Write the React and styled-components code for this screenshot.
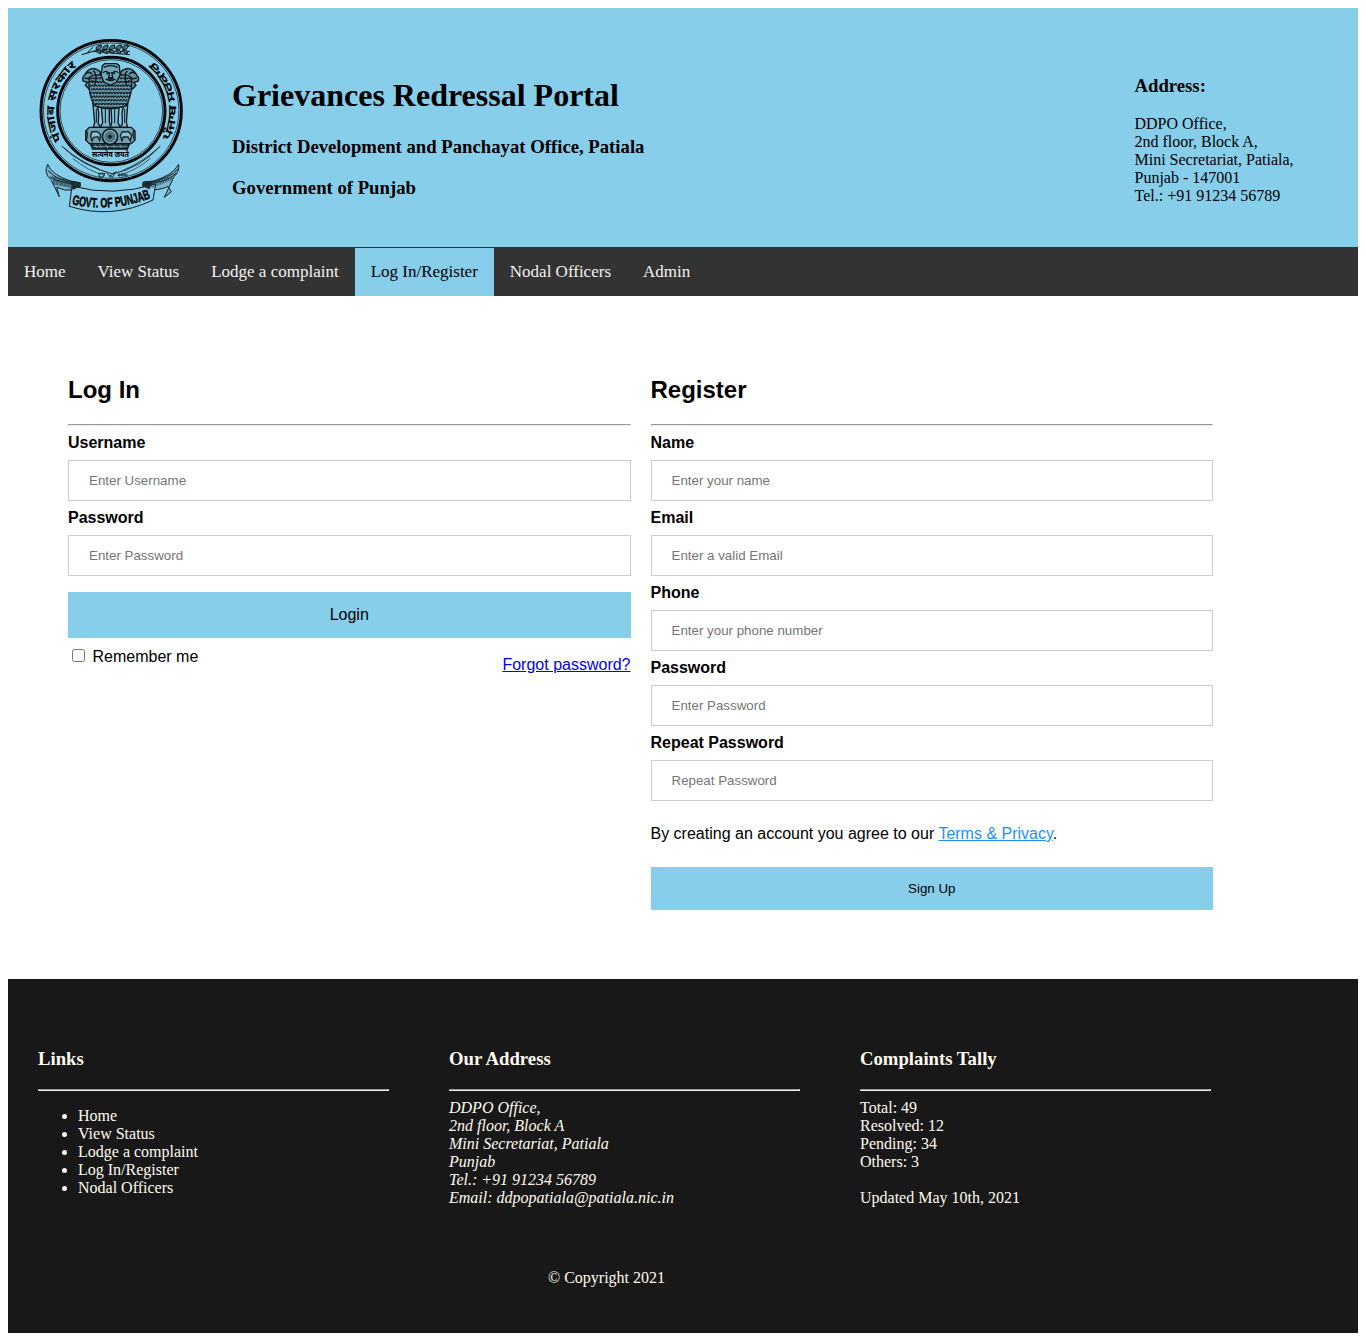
import React from "react";
import styled, { createGlobalStyle } from "styled-components";

const GlobalStyle = createGlobalStyle`
  body {
    margin: 8px;
    background: #fff;
    color: #000;
    font-family: "Liberation Serif", "Times New Roman", serif;
    font-size: 16px;
  }
`;

const Header = styled.header`
  display: flex;
  align-items: flex-start;
  box-sizing: border-box;
  height: 239px;
  padding: 22px 64.5px 0 22px;
  background: #87ceeb;
`;

const Emblem = styled.svg`
  flex: none;
  width: 160px;
  height: 190px;
`;

const Titles = styled.div`
  flex: 1;
  padding: 47px 0 0 42px;
`;

const PortalTitle = styled.h1`
  margin: 0 0 22px;
  font-size: 32px;
  line-height: 37px;
`;

const Subtitle = styled.h3`
  margin: 0 0 20px;
  font-size: 18.72px;
  line-height: 21px;
`;

const HeaderAddress = styled.div`
  width: 159px;
  padding-top: 45px;
  line-height: 18px;
  white-space: nowrap;
`;

const Nav = styled.nav`
  display: flex;
  padding-top: 1px;
  background: #333;
`;

const NavLink = styled.a`
  padding: 14px 16px;
  font-size: 17px;
  line-height: 20px;
  text-decoration: none;
  background: ${(p) => (p.$active ? "#87ceeb" : "transparent")};
  color: ${(p) => (p.$active ? "#000" : "#f2f2f2")};
`;

const Main = styled.main`
  display: grid;
  grid-template-columns: 562.5px 562.5px;
  column-gap: 20px;
  box-sizing: border-box;
  height: 683px;
  padding: 80px 60px 0;
  font-family: "Liberation Sans", Arial, sans-serif;
  line-height: 18px;
`;

const FormTitle = styled.h2`
  margin: 0 0 21px;
  font-size: 24px;
  line-height: 27px;
`;

const Rule = styled.hr`
  margin: 0 0 8px;
`;

const Label = styled.label`
  display: block;
  font-weight: bold;
`;

const Input = styled.input`
  display: block;
  box-sizing: border-box;
  width: 100%;
  height: 41px;
  margin: 8px 0;
  padding: 12px 20px;
  border: 1px solid #ccc;
  font-family: inherit;
  font-size: 13.333px;

  &::placeholder {
    color: #757575;
  }
`;

const Button = styled.button`
  display: block;
  width: 100%;
  margin: 16px 0 8px;
  padding: 14px 20px;
  border: none;
  background: #87ceeb;
  color: #000;
  font-family: inherit;
  font-size: ${(p) => (p.$large ? "16px" : "13.333px")};
  line-height: ${(p) => (p.$large ? "18px" : "15px")};
`;

const LoginOptions = styled.div`
  display: flex;
  justify-content: space-between;
  align-items: flex-start;
`;

const Remember = styled.label`
  display: flex;
  align-items: flex-start;
  padding-top: 2px;
`;

const Checkbox = styled.input`
  width: 13px;
  height: 13px;
  margin: 1px 7.5px 0 4px;
`;

const Forgot = styled.a`
  padding-top: 10px;
  color: #0000ee;
  text-decoration: underline;
`;

const Terms = styled.p`
  margin: 24px 0;
`;

const TermsLink = styled.a`
  color: #1e90ff;
  text-decoration: underline;
`;

const Footer = styled.footer`
  box-sizing: border-box;
  height: 354px;
  padding: 69px 30px 0;
  background: #181818;
  color: #fffaf0;
  line-height: 18px;
`;

const FooterColumns = styled.div`
  display: grid;
  grid-template-columns: repeat(3, 351px);
  column-gap: 60px;
  height: 221px;
`;

const BlockTitle = styled.h3`
  margin: 0 0 ${(p) => p.$gap || 20}px;
  font-size: 18.72px;
  line-height: 21px;
`;

const LinkList = styled.ul`
  margin: 16px 0 0;
  padding-left: 40px;
`;

const FooterAddress = styled.address`
  font-style: italic;
`;

const Copyright = styled.div`
  width: 1137px;
  text-align: center;
`;

const SealText = styled.text`
  font-family: "Noto Sans", "Noto Sans Devanagari", "Noto Sans Gurmukhi", "DejaVu Sans", sans-serif;
  font-weight: bold;
  font-size: ${(p) => p.$size}px;
`;

const RibbonText = styled.text`
  font-family: "Liberation Sans", Arial, sans-serif;
  font-weight: bold;
  font-size: 41px;
  stroke: #000;
  stroke-width: 1.4px;
`;

const navItems = ["Home", "View Status", "Lodge a complaint", "Log In/Register", "Nodal Officers", "Admin"];

const registerFields = [
  ["Name", "Enter your name", "text"],
  ["Email", "Enter a valid Email", "text"],
  ["Phone", "Enter your phone number", "text"],
  ["Password", "Enter Password", "password"],
  ["Repeat Password", "Repeat Password", "password"],
];

function Field({ label, placeholder, type = "text" }) {
  return (
    <>
      <Label>{label}</Label>
      <Input type={type} placeholder={placeholder} />
    </>
  );
}

/* Scalloped rows of fur on the lions' chests */
function Mane() {
  const rows = [];
  for (let r = 0; r < 9; r++) {
    const y = 142 + r * 11;
    const half = 61 - Math.max(0, r - 5) * 5;
    let d = "";
    for (let x = 241 - half + (r % 2) * 4; x < 237 + half; x += 9) {
      d += `M${x} ${y}q3 10 7 0`;
    }
    rows.push(<path key={r} d={d} />);
  }
  return <g fill="none" stroke="#10181c" strokeWidth="3.4">{rows}</g>;
}

function PunjabEmblem() {
  const rays = Array.from({ length: 16 }, (_, i) => (
    <path key={i} d="M240 307V320" transform={`rotate(${i * 22.5} 240 320)`} />
  ));
  return (
    <Emblem viewBox="0 0 480 570" role="img" aria-label="Government of Punjab">
      <defs>
        <path id="sealLeft" d="M96 330A170 170 0 0 1 150 102" />
        <path id="sealRight" d="M417 332A195 195 0 0 0 357 84" />
        <path id="ribbon" d="M125 523Q245 550 369 502" />
        <clipPath id="chest">
          <path d="M178 138Q241 115 304 138Q308 190 289 227Q241 245 193 227Q174 190 178 138Z" />
        </clipPath>
      </defs>
      <g fill="none" stroke="#05090b">
        <circle cx="243.5" cy="242" r="210.5" strokeWidth="9" />
        <circle cx="243.5" cy="242" r="203" strokeWidth="2" />
        <circle cx="244" cy="243" r="161" strokeWidth="9" />
        <circle cx="244" cy="243" r="154" strokeWidth="2" />
      </g>
      {/* Wheat ear */}
      <g fill="none" stroke="#0b1317" strokeWidth="3">
        <path d="M155 74L190 64H300M170 70L190 51M190 64L298 48M190 64L300 74" />
        {[198, 218, 238, 258, 278].map((x) => (
          <g key={x} fill="#4c7686">
            <path d={`M${x} 58q-1-12 16-13q2 9-6 13z`} />
            <path d={`M${x} 60q1 10 14 11q3-6-5-11z`} />
          </g>
        ))}
      </g>
      <SealText $size={34}>
        <textPath href="#sealLeft" textLength="246" lengthAdjust="spacingAndGlyphs">पंजाब सरकार</textPath>
      </SealText>
      <SealText $size={34}>
        <textPath href="#sealRight" textLength="262" lengthAdjust="spacingAndGlyphs">ਪੰਜਾਬ ਸਰਕਾਰ</textPath>
      </SealText>
      {/* Legs */}
      <g fill="#7db9d2" stroke="#0c161a" strokeWidth="4">
        <path d="M188 212Q205 225 206 248L205 282L213 292H190L194 278Z" />
        <path d="M213 220H238V276L242 292H211L218 278Z" />
        <path d="M243 220H268L264 278L271 292H241L245 278Z" />
        <path d="M294 212Q278 225 276 248L277 282L270 292H293L289 278Z" />
        <path d="M226 232V280M254 232V280M199 236V278M284 236V278" strokeWidth="3" />
      </g>
      {/* Side lions, chest and facing head */}
      <g fill="#6496a8" stroke="#0c161a" strokeWidth="4">
        <path d="M211 126Q190 107 172 123L158 143L159 153L172 157L166 166L178 178L207 174Z" />
        <path d="M272 126Q293 107 311 123L326 143L325 153L312 157L318 166L306 178L277 174Z" />
        <path d="M178 142Q202 124 241 151Q281 124 304 142Q309 190 289 227Q241 245 193 227Q173 190 178 142Z" />
      </g>
      <g clipPath="url(#chest)"><Mane /></g>
      <g fill="#6fa8bb" stroke="#0c161a" strokeWidth="4">
        <path d="M217 107L224 101H260L268 107L270 135L259 157L242 165L222 157L213 136Z" />
        <path d="M221 112Q242 102 263 112M219 128Q229 119 237 130M246 130Q255 119 265 128M239 126L236 143H248L245 126M226 150Q241 142 257 150" fill="none" />
        <path d="M229 130h5M250 130h5M233 151h18" strokeWidth="6" />
        <path d="M166 132Q176 121 187 133M163 144L180 147M174 157L190 152M318 132Q308 121 297 133M321 144L304 147M310 157L294 152M190 122Q204 132 194 166M292 122Q280 132 290 166" fill="none" />
      </g>
      {/* Abacus with wheel, horse and bull */}
      <g fill="#719fac" stroke="#0c161a" strokeWidth="4">
        <path d="M178 292H304L315 303V330L304 341H178L167 330V303Z" />
        <path d="M181 341H299L292 357H188Z" fill="#223840" />
        <circle cx="240" cy="320" r="23" fill="#76b2ca" strokeWidth="5" />
        <circle cx="240" cy="320" r="15" strokeWidth="1.5" />
        <circle cx="240" cy="320" r="3" fill="#0c161a" />
        <g strokeWidth="1.3">{rays}</g>
      </g>
      <g fill="#87bfd3" stroke="#102026" strokeWidth="4">
        <path d="M185 306L201 304L212 314L209 331L203 320L191 322L186 333L182 318Z" />
        <path d="M271 317L276 306L295 305L305 315L301 333L294 321L280 321L276 332Z" />
        <path d="M168 301Q175 308 169 330M312 301Q306 310 314 330" fill="none" />
      </g>
      <g stroke="#8cbfd0" strokeWidth="2" fill="none"><path d="M190 350H292M195 344L201 354M210 344L216 354M228 344L233 354M250 344L255 354M270 344L274 354" /></g>
      <SealText $size={22} x="186" y="381" textLength="111" lengthAdjust="spacingAndGlyphs">सत्यमेव जयते</SealText>
      {/* Crossed blades below the capital */}
      <g fill="none" stroke="#142329">
        <path d="M95 348Q155 407 248 432Q334 412 391 348" strokeWidth="3" />
        <path d="M100 352Q149 394 208 417M386 353Q333 399 280 420" strokeWidth="2" />
        <path d="M128 385Q175 424 225 436M362 385Q316 424 262 436" strokeWidth="2" />
        <path d="M207 430H225L219 441H208ZM230 430L247 443L258 424M237 442L253 427M264 435H294M267 430V440M276 430V440M285 430V440" strokeWidth="3" />
      </g>
      {/* Ribbon */}
      <g fill="#78b7d2" stroke="#101c21" strokeWidth="3">
        <path d="M53 403Q40 430 63 449L88 500L80 472Q105 484 128 480L151 469V458L121 453Q64 434 53 403Z" />
        <path d="M446 403Q449 425 432 440L403 502L424 485L414 470Q381 483 358 478L338 469L339 456L370 453Q427 437 446 403Z" />
        <path d="M126 468Q247 502 377 462L369 510Q246 569 118 529Z" fill="#87ceeb" />
        <path d="M60 440Q88 462 151 462M54 422Q83 453 137 459M339 462Q409 460 438 430M355 459Q420 446 446 415" fill="none" strokeWidth="3" />
      </g>
      <g stroke="#18282e" strokeWidth="2">
        {Array.from({ length: 15 }, (_, i) => <path key={i} d={`M${68 + i * 4} ${438 + i}L${72 + i * 4} ${464 + i * 0.8}`} />)}
        {Array.from({ length: 13 }, (_, i) => <path key={i} d={`M${363 + i * 5} ${457 - i * 1.6}L${367 + i * 5} ${474 - i * 2}`} />)}
      </g>
      <path d="M121 453L151 458V469L128 480ZM370 453L339 456L338 469L358 478Z" fill="#1b2c33" />
      <RibbonText><textPath href="#ribbon" textLength="242" lengthAdjust="spacingAndGlyphs">GOVT. OF PUNJAB</textPath></RibbonText>
    </Emblem>
  );
}

export default function App() {
  return (
    <>
      <GlobalStyle />
      <Header>
        <PunjabEmblem />
        <Titles>
          <PortalTitle>Grievances Redressal Portal</PortalTitle>
          <Subtitle>District Development and Panchayat Office, Patiala</Subtitle>
          <Subtitle>Government of Punjab</Subtitle>
        </Titles>
        <HeaderAddress>
          <BlockTitle $gap={19}>Address:</BlockTitle>
          DDPO Office,<br />
          2nd floor, Block A,<br />
          Mini Secretariat, Patiala,<br />
          Punjab - 147001<br />
          Tel.: +91 91234 56789
        </HeaderAddress>
      </Header>
      <Nav>
        {navItems.map((item) => (
          <NavLink key={item} $active={item === "Log In/Register"}>{item}</NavLink>
        ))}
      </Nav>
      <Main>
        <section>
          <FormTitle>Log In</FormTitle>
          <Rule />
          <Field label="Username" placeholder="Enter Username" />
          <Field label="Password" placeholder="Enter Password" type="password" />
          <Button $large>Login</Button>
          <LoginOptions>
            <Remember><Checkbox type="checkbox" />Remember me</Remember>
            <Forgot>Forgot password?</Forgot>
          </LoginOptions>
        </section>
        <section>
          <FormTitle>Register</FormTitle>
          <Rule />
          {registerFields.map(([label, placeholder, type]) => (
            <Field key={label} label={label} placeholder={placeholder} type={type} />
          ))}
          <Terms>By creating an account you agree to our <TermsLink>Terms &amp; Privacy</TermsLink>.</Terms>
          <Button>Sign Up</Button>
        </section>
      </Main>
      <Footer>
        <FooterColumns>
          <div>
            <BlockTitle>Links</BlockTitle>
            <Rule />
            <LinkList>
              {navItems.slice(0, 5).map((item) => <li key={item}>{item}</li>)}
            </LinkList>
          </div>
          <div>
            <BlockTitle>Our Address</BlockTitle>
            <Rule />
            <FooterAddress>
              DDPO Office,<br />
              2nd floor, Block A<br />
              Mini Secretariat, Patiala<br />
              Punjab<br />
              Tel.: +91 91234 56789<br />
              Email: ddpopatiala@patiala.nic.in
            </FooterAddress>
          </div>
          <div>
            <BlockTitle>Complaints Tally</BlockTitle>
            <Rule />
            Total: 49<br />
            Resolved: 12<br />
            Pending: 34<br />
            Others: 3<br />
            <br />
            Updated May 10th, 2021
          </div>
        </FooterColumns>
        <Copyright>© Copyright 2021</Copyright>
      </Footer>
    </>
  );
}
